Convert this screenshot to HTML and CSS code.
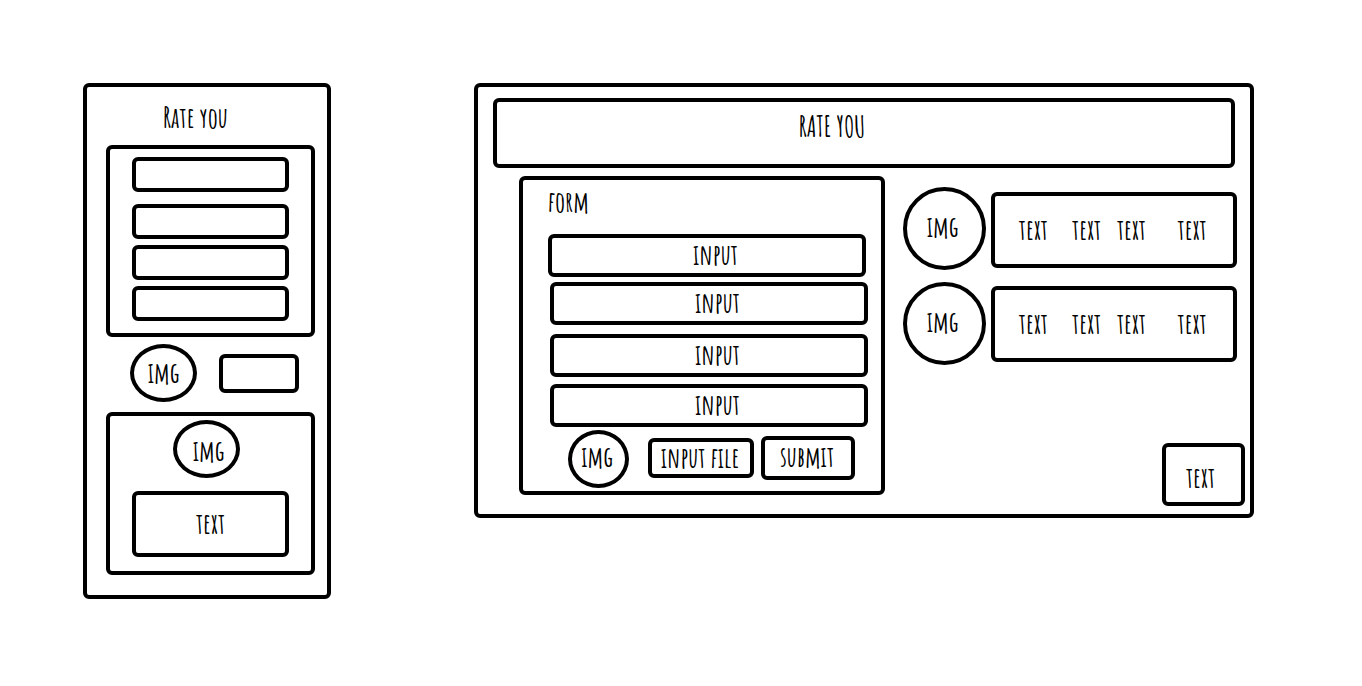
FILE: index.html
```html
<!DOCTYPE html>
<html lang="en">
<head>
<meta charset="utf-8">
<meta name="viewport" content="width=device-width, initial-scale=1">
<title>Rate you</title>
<link rel="stylesheet" href="styles.css">
</head>
<body>
<main class="board">
  <section class="frame phone" aria-label="Mobile layout">
    <h2 class="phone-title">Rate you</h2>
    <form class="frame phone-form">
      <input class="frame phone-field" type="text" aria-label="Field 1">
      <input class="frame phone-field" type="text" aria-label="Field 2">
      <input class="frame phone-field" type="text" aria-label="Field 3">
      <input class="frame phone-field" type="text" aria-label="Field 4">
    </form>
    <div class="phone-actions">
      <div class="circle oval">img</div>
      <button class="frame phone-button" type="button" aria-label="Send"></button>
    </div>
    <article class="frame phone-card">
      <div class="circle oval">img</div>
      <p class="frame phone-text">text</p>
    </article>
  </section>

  <section class="frame desktop" aria-label="Desktop layout">
    <header class="frame desktop-header"><h1 class="title">RATE YOU</h1></header>
    <div class="desktop-body">
      <form class="frame desktop-form">
        <h2 class="form-title">form</h2>
        <input class="frame field" type="text" aria-label="Input 1" value="input">
        <input class="frame field" type="text" aria-label="Input 2" value="input">
        <input class="frame field" type="text" aria-label="Input 3" value="input">
        <input class="frame field" type="text" aria-label="Input 4" value="input">
        <div class="form-actions">
          <div class="circle form-img">img</div>
          <button class="frame file-button" type="button">input file</button>
          <button class="frame submit-button" type="submit">submit</button>
        </div>
      </form>
      <div class="side">
        <article class="entry">
          <div class="circle avatar">img</div>
          <div class="frame entry-texts"><span>text</span><span>text</span><span>text</span><span>text</span></div>
        </article>
        <article class="entry">
          <div class="circle avatar">img</div>
          <div class="frame entry-texts"><span>text</span><span>text</span><span>text</span><span>text</span></div>
        </article>
        <p class="frame note">text</p>
      </div>
    </div>
  </section>
</main>
</body>
</html>
```

FILE: styles.css
```css
* {
  box-sizing: border-box;
}

body {
  margin: 0;
  background: #fff;
  color: #000;
  font-family: "Amatic SC", "Liberation Sans Narrow", "Liberation Sans", sans-serif;
  font-size: 28px;
  font-weight: 700;
  line-height: 24px;
}

h1,
h2,
p {
  margin: 0;
  font-size: inherit;
  font-weight: inherit;
}

input,
button {
  margin: 0;
  padding: 0;
  background: transparent;
  color: inherit;
  font: inherit;
  text-align: center;
  min-width: 0;
}

.board {
  display: grid;
  grid-template-columns: 248fr 780fr;
  gap: 143px;
  align-items: start;
  padding: 83px 108px 40px 83px;
}

.frame {
  border: 4px solid #000;
  border-radius: 6px;
}

.circle {
  display: flex;
  align-items: center;
  justify-content: center;
  border: 4px solid #000;
  border-radius: 50%;
}

/* Mobile layout */
.phone {
  display: flex;
  flex-direction: column;
  padding: 19px 12px 20px 19px;
}

.phone-title {
  padding: 0 0 15px 57px;
}

.phone-form {
  display: flex;
  flex-direction: column;
  gap: 6px;
  padding: 8px 22px 12px;
}

.phone-field {
  width: 100%;
  height: 35px;
}

.phone-field:first-child {
  margin-bottom: 6px;
}

.phone-actions {
  display: flex;
  align-items: center;
  justify-content: space-between;
  padding: 7px 16px 10px 24px;
}

.oval {
  width: 67px;
  height: 58px;
}

.phone-button {
  width: 80px;
  height: 39px;
}

.phone-card {
  display: flex;
  flex-direction: column;
  gap: 13px;
  padding: 4px 22px 14px;
}

.phone-card .oval {
  align-self: center;
  margin-right: 8px;
  padding: 4px 0 0 4px;
}

.phone-text {
  padding: 17px 0;
  text-align: center;
}

/* Desktop layout */
.desktop {
  display: flex;
  flex-direction: column;
  gap: 8px;
  padding: 11px 5px 8px 15px;
}

.desktop-header {
  margin-right: 10px;
  padding: 13px 64px 25px 0;
  text-align: center;
}

.desktop-body {
  display: grid;
  grid-template-columns: 366fr 342fr;
  gap: 18px;
  padding-left: 26px;
}

.desktop-form {
  display: flex;
  flex-direction: column;
  margin-bottom: 11px;
  padding: 10px 13px 3px 25px;
}

.form-title {
  padding-bottom: 20px;
}

.field {
  height: 43px;
  margin: 0 0 7px 2px;
  padding: 0 0 2px 17px;
}

.field:first-of-type {
  margin: 0 2px 5px 0;
}

.field:nth-of-type(2) {
  margin-bottom: 9px;
}

.field:nth-of-type(4) {
  margin-bottom: 3px;
}

.form-actions {
  display: flex;
  align-items: center;
  padding: 0 13px 0 20px;
}

.form-img {
  width: 61px;
  height: 58px;
  padding: 0 3px 4px 0;
}

.file-button {
  width: 106px;
  height: 40px;
  margin: 0 0 2px auto;
  padding-right: 2px;
}

.submit-button {
  width: 94px;
  height: 44px;
  margin: 0 0 2px 7px;
  padding: 0 2px 2px 0;
}

.side {
  display: flex;
  flex-direction: column;
  gap: 12px;
  padding-top: 11px;
}

.entry {
  display: flex;
  align-items: center;
  gap: 5px;
  padding-right: 8px;
}

.avatar {
  flex: none;
  width: 83px;
  height: 83px;
  padding: 0 4px 3px 0;
}

.entry-texts {
  display: grid;
  grid-template-columns: 61fr 46fr 44fr 78fr;
  flex: 1;
  padding: 22px 2px 22px 8px;
  text-align: center;
}

.entry:first-child .entry-texts {
  margin-top: 3px;
}

.note {
  align-self: flex-end;
  width: 83px;
  margin-top: auto;
  padding: 19px 6px 12px 0;
  text-align: center;
}
```
